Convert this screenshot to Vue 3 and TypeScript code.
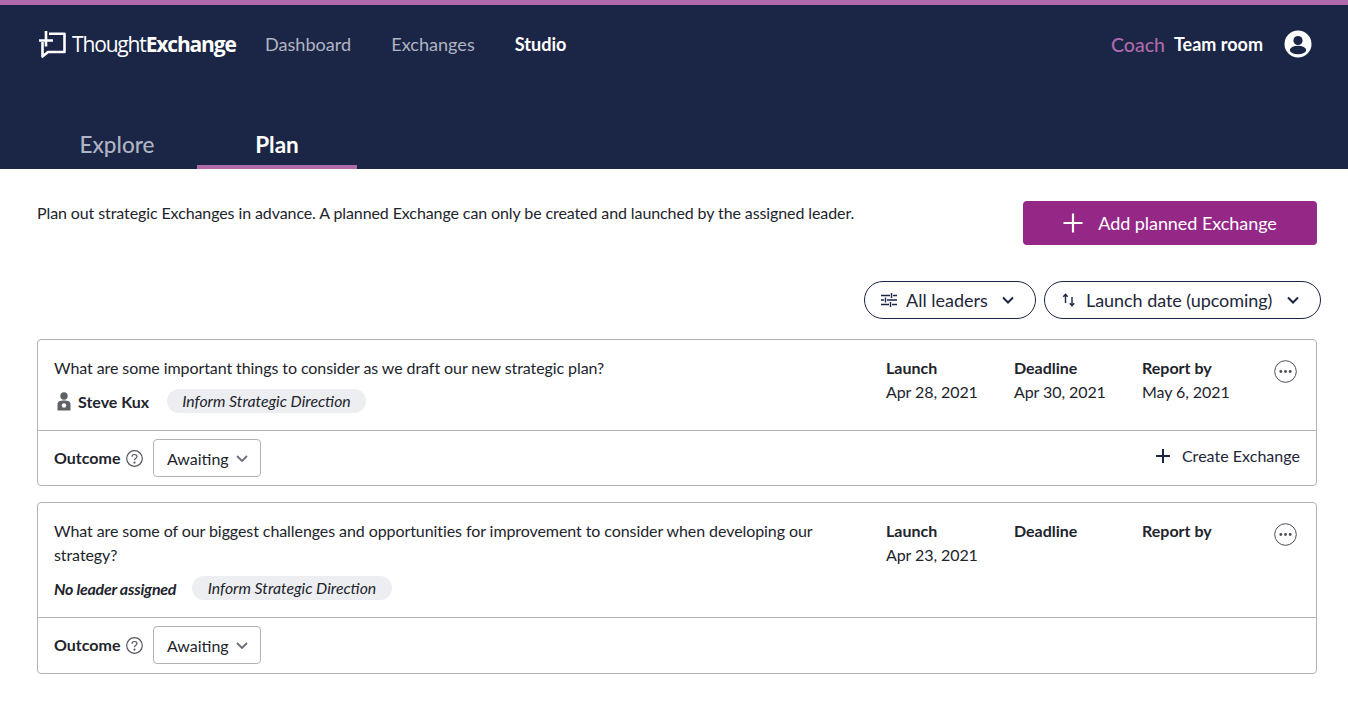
<template>
  <div class="page">
    <header class="top">
      <div class="nav-row">
        <div class="logo">
          <svg width="27" height="27" viewBox="0 0 27 27" fill="none" stroke="#fff" stroke-width="2.600">
            <path d="M10 2.800H25.500V21H9L3.500 25.500V11" stroke-linejoin="round" />
            <path d="M7 0V15.500M0 9.500H14" />
          </svg>
          <span class="logo-text">Thought<b>Exchange</b></span>
        </div>
        <nav class="nav-links">
          <a v-for="link in links" :key="link.label" :class="{ active: link.active }">{{ link.label }}</a>
        </nav>
        <div class="nav-right">
          <span class="coach">Coach</span>
          <span class="team">Team room</span>
          <svg class="avatar" width="28" height="28" viewBox="0 0 28 28">
            <circle cx="14" cy="14" r="13.500" fill="#fff" />
            <circle cx="14" cy="10.500" r="4.600" fill="#1b2545" />
            <ellipse cx="14" cy="20" rx="8.200" ry="4.300" fill="#1b2545" />
          </svg>
        </div>
      </div>
      <div class="tabs">
        <div v-for="tab in tabs" :key="tab" class="tab" :class="{ active: tab === activeTab }">{{ tab }}</div>
      </div>
    </header>

    <main class="content">
      <div class="intro">
        <p>Plan out strategic Exchanges in advance. A planned Exchange can only be created and launched by the assigned leader.</p>
        <button class="add-btn">
          <svg width="20" height="20" viewBox="0 0 20 20" stroke="#fff" stroke-width="2.200"><path d="M10 0.500V19.500M0.500 10H19.500" /></svg>
          Add planned Exchange
        </button>
      </div>

      <div class="filters">
        <button class="pill leaders">
          <svg width="16" height="14" viewBox="0 0 16 14" stroke="#1b2545" stroke-width="1.400" fill="none">
            <path d="M0 2.500H9M12 2.500H16M10.500 0V5M0 7H3M6 7H16M4.500 4.500V9.500M0 11.500H8M11 11.500H16M9.500 9V14" />
          </svg>
          <span>All leaders</span>
          <svg class="chev" width="12" height="8" viewBox="0 0 12 8" fill="none" stroke="#1b2545" stroke-width="2"><path d="M1 1.500L6 6.500L11 1.500" /></svg>
        </button>
        <button class="pill sort">
          <svg width="14" height="14" viewBox="0 0 14 14" stroke="#1b2545" stroke-width="1.400" fill="none">
            <path d="M3.500 10V1.500M1.300 3.700L3.500 1.200L5.700 3.700M10 4V12.500M7.800 10.300L10 12.800L12.200 10.300" />
          </svg>
          <span>Launch date (upcoming)</span>
          <svg class="chev" width="12" height="8" viewBox="0 0 12 8" fill="none" stroke="#1b2545" stroke-width="2"><path d="M1 1.500L6 6.500L11 1.500" /></svg>
        </button>
      </div>

      <section v-for="item in items" :key="item.question" class="card">
        <div class="card-top">
          <div class="card-main">
            <p class="question">{{ item.question }}</p>
            <div class="meta">
              <span v-if="item.leader" class="leader">
                <svg width="14" height="19" viewBox="0 0 14 19">
                  <circle cx="7" cy="4" r="3.700" fill="#5f6269" />
                  <path d="M0.500 12C0.500 9.500 3 8.500 7 8.500S13.500 9.500 13.500 12V18.500H0.500Z" fill="#5f6269" />
                  <circle cx="7" cy="13.500" r="2.200" fill="#fff" />
                </svg>
                {{ item.leader }}
              </span>
              <em v-else class="no-leader">No leader assigned</em>
              <span class="tag">{{ item.tag }}</span>
            </div>
          </div>
          <div v-for="col in item.dates" :key="col.label" class="date-col">
            <div class="date-label">{{ col.label }}</div>
            <div class="date-value">{{ col.value }}</div>
          </div>
          <svg class="more" width="23" height="23" viewBox="0 0 23 23">
            <circle cx="11.500" cy="11.500" r="10.800" fill="none" stroke="#4a4d57" stroke-width="1" />
            <circle cx="6.800" cy="11.500" r="1.400" fill="#4a4d57" />
            <circle cx="11.500" cy="11.500" r="1.400" fill="#4a4d57" />
            <circle cx="16.200" cy="11.500" r="1.400" fill="#4a4d57" />
          </svg>
        </div>
        <div class="card-bottom">
          <span class="outcome">Outcome</span>
          <svg class="help" width="17" height="17" viewBox="0 0 17 17" fill="none" stroke="#55585f" stroke-width="1.200">
            <circle cx="8.500" cy="8.500" r="7.800" />
            <path d="M6 6.800C6 5.300 7.100 4.500 8.500 4.500S11 5.400 11 6.600C11 8.300 8.500 8.300 8.500 10.300" />
            <circle cx="8.500" cy="12.600" r="0.500" fill="#55585f" />
          </svg>
          <div class="select">
            Awaiting
            <svg width="12" height="7" viewBox="0 0 12 7" fill="none" stroke="#6b6e78" stroke-width="1.800"><path d="M1 1L6 6L11 1" /></svg>
          </div>
          <a v-if="item.canCreate" class="create">
            <svg width="16" height="16" viewBox="0 0 16 16" stroke="#1b2545" stroke-width="2"><path d="M8 1V15M1 8H15" /></svg>
            Create Exchange
          </a>
        </div>
      </section>
    </main>
  </div>
</template>

<script setup lang="ts">
interface DateCol {
  label: string
  value: string
}

interface PlanItem {
  question: string
  leader?: string
  tag: string
  dates: DateCol[]
  canCreate: boolean
}

const links = [
  { label: 'Dashboard', active: false },
  { label: 'Exchanges', active: false },
  { label: 'Studio', active: true }
]

const tabs = ['Explore', 'Plan']
const activeTab = 'Plan'

const items: PlanItem[] = [
  {
    question: 'What are some important things to consider as we draft our new strategic plan?',
    leader: 'Steve Kux',
    tag: 'Inform Strategic Direction',
    dates: [
      { label: 'Launch', value: 'Apr 28, 2021' },
      { label: 'Deadline', value: 'Apr 30, 2021' },
      { label: 'Report by', value: 'May 6, 2021' }
    ],
    canCreate: true
  },
  {
    question: 'What are some of our biggest challenges and opportunities for improvement to consider when developing our strategy?',
    tag: 'Inform Strategic Direction',
    dates: [
      { label: 'Launch', value: 'Apr 23, 2021' },
      { label: 'Deadline', value: '' },
      { label: 'Report by', value: '' }
    ],
    canCreate: false
  }
]
</script>

<style>
html,
body {
  background: #fff;
}
</style>

<style scoped>
.page {
  font-family: Lato, "Liberation Sans", sans-serif;
  color: #22242c;
  min-height: 706px;
}

.top {
  background: #1b2545;
  border-top: 5px solid #b06aac;
  height: 164px;
  box-sizing: content-box;
  display: flex;
  flex-direction: column;
  justify-content: space-between;
  padding: 0 37px;
}

.nav-row {
  display: flex;
  align-items: center;
  padding-top: 24px;
  height: 30px;
}

.logo {
  display: flex;
  align-items: center;
  gap: 6px;
  width: 228px;
}

.logo svg {
  margin-left: 2px;
}

.logo-text {
  color: #fff;
  font-family: "Open Sans", sans-serif;
  font-size: 21px;
  letter-spacing: -1.150px;
  font-weight: 400;
}

.logo-text b {
  font-weight: 700;
}

.nav-links {
  display: flex;
  gap: 40px;
  font-size: 18.100px;
  color: #b0b4c3;
}

.nav-links .active {
  color: #fff;
  font-weight: 700;
}

.nav-right {
  margin-left: auto;
  margin-right: -1px;
  display: flex;
  align-items: center;
}

.coach {
  color: #b06aac;
  font-size: 19.500px;
  font-weight: 500;
}

.team {
  color: #fff;
  font-size: 18px;
  font-weight: 700;
  margin-left: 9px;
}

.avatar {
  margin-left: 21px;
}

.tabs {
  display: flex;
}

.tab {
  width: 160px;
  height: 45px;
  box-sizing: border-box;
  text-align: center;
  font-size: 22.500px;
  font-weight: 500;
  line-height: 42px;
  color: #b0b4c3;
  border-bottom: 4px solid transparent;
}

.tab.active {
  color: #fff;
  font-weight: 700;
  border-bottom-color: #b06aac;
}

.content {
  padding: 32px 31px 0 37px;
}

.intro {
  display: flex;
  justify-content: space-between;
  align-items: flex-start;
}

.intro p {
  margin: 2px 0 0;
  font-size: 16px;
  line-height: 20px;
  letter-spacing: -0.100px;
}

.add-btn {
  width: 294px;
  height: 44px;
  background: #952787;
  border: none;
  border-radius: 4px;
  color: #fff;
  font-family: inherit;
  font-size: 18px;
  letter-spacing: -0.050px;
  display: flex;
  align-items: center;
  justify-content: center;
  gap: 15px;
}

.filters {
  display: flex;
  justify-content: flex-end;
  gap: 8px;
  margin: 36px -4px 20px 0;
}

.pill {
  height: 38px;
  box-sizing: border-box;
  border: 1px solid #1b2545;
  border-radius: 19px;
  background: #fff;
  color: #22263a;
  font-family: inherit;
  font-size: 18px;
  display: flex;
  align-items: center;
  padding: 0;
}

.leaders {
  width: 172px;
  padding-left: 16px;
  gap: 9px;
}

.leaders .chev {
  margin-left: 5px;
}

.sort {
  width: 277px;
  padding-left: 17px;
  gap: 10px;
}

.sort span {
  letter-spacing: -0.050px;
}

.sort .chev {
  margin-left: 5px;
}

.card {
  border: 1px solid #b3b3b3;
  border-radius: 4px;
  margin-bottom: 16px;
}

.card-top {
  display: flex;
  align-items: flex-start;
  padding: 16px 20px 17px 16px;
  border-bottom: 1px solid #b3b3b3;
}

.card-main {
  width: 832px;
  flex-shrink: 0;
}

.question {
  margin: 0;
  font-size: 16px;
  line-height: 24px;
  width: 775px;
  letter-spacing: -0.080px;
}

.meta {
  display: flex;
  align-items: center;
  margin-top: 9px;
  height: 24px;
}

.leader {
  display: flex;
  align-items: center;
  gap: 7px;
  font-weight: 700;
  font-size: 16px;
  margin: 0 1.500px 0 3px;
}

.no-leader {
  font-weight: 700;
  font-size: 16px;
  letter-spacing: -0.250px;
}

.tag {
  margin-left: 16px;
  background: #eceef1;
  border-radius: 12px;
  height: 24px;
  line-height: 24px;
  padding: 0 15.500px;
  font-size: 15.800px;
  font-style: italic;
}

.date-col {
  width: 128px;
  flex-shrink: 0;
  font-size: 16px;
  line-height: 24px;
}

.date-label {
  font-weight: 700;
}

.date-value {
  letter-spacing: -0.080px;
}

.more {
  margin: 4px 0 0 3.500px;
  flex-shrink: 0;
}

.card-bottom {
  display: flex;
  align-items: center;
  height: 54px;
  padding: 0 16px;
}

.card:last-of-type .card-bottom {
  padding-bottom: 1px;
}

.outcome {
  font-weight: 700;
  font-size: 16px;
  padding-bottom: 2px;
}

.help {
  margin-left: 6px;
}

.select {
  margin-left: 10px;
  height: 38px;
  width: 108px;
  box-sizing: border-box;
  border: 1px solid #b3b3b3;
  border-radius: 4px;
  display: flex;
  align-items: center;
  padding-left: 12.500px;
  gap: 7px;
  font-size: 16px;
}

.create {
  margin-left: auto;
  display: flex;
  align-items: center;
  gap: 11px;
  font-size: 16px;
  letter-spacing: 0.030px;
  color: #22263a;
  padding-bottom: 5px;
}
</style>
